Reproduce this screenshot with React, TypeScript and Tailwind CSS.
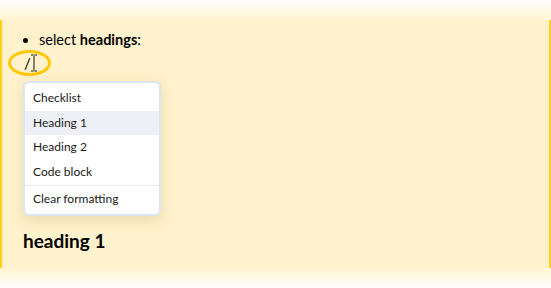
import React from "react";

const items = ["Checklist", "Heading 1", "Heading 2", "Code block"];

function TextCursor() {
  return (
    <svg width="8" height="18" viewBox="0 0 8 18" className="absolute left-[30px] top-[54px] z-10">
      <path d="M1 1h2.5M4.5 1H7M4 1.5v15M1 17h2.5M4.5 17H7" stroke="#111" strokeWidth="1" fill="none" />
    </svg>
  );
}

function SlashMenu() {
  return (
    <div className="absolute left-[23px] top-[81px] z-10 w-[138px] rounded-[6px] border-2 border-[#dde5f0] bg-white py-[3px] text-[12px] text-[#1a1a1a] shadow-[0_4px_14px_rgba(120,100,40,0.18)]">
      {items.map((label) => (
        <div
          key={label}
          className={`flex h-[24.5px] items-center px-[8px] ${label === "Heading 1" ? "bg-[#eff0f5]" : ""}`}
        >
          {label}
        </div>
      ))}
      <div className="my-[1px] h-px bg-[#eceef2]" />
      <div className="flex h-[24px] items-center px-[8px]">Clear formatting</div>
    </div>
  );
}

export default function App() {
  return (
    <div
      className="relative flex h-[288px] w-[551px] flex-col overflow-hidden bg-[#fff2cc] py-[20px] text-black"
      style={{ fontFamily: 'Lato, "Noto Sans", sans-serif' }}
    >
      <div className="pointer-events-none absolute inset-x-0 top-0 z-20 h-[22px] bg-gradient-to-b from-white to-[#fff2cc]/0" />
      <div className="pointer-events-none absolute inset-x-0 bottom-0 z-20 h-[22px] bg-gradient-to-t from-white to-[#fff2cc]/0" />

      <div className="flex flex-1 flex-col border-x-2 border-[#fcd116] pt-[10px] pl-[21px]">
        <ul className="list-disc pl-[16px] text-[14.5px] leading-5">
          <li>
            select <b>headings</b>:
          </li>
        </ul>

        <div className="pt-[3px] pl-[1px] text-[15px] leading-5">/</div>

        <div className="mt-[156px] text-[19px] font-bold leading-6">heading 1</div>
      </div>

      <div className="absolute left-[8px] top-[50px] h-[26px] w-[43px] rounded-[50%] border-[3px] border-[#ffc800]" />
      <TextCursor />
      <SlashMenu />
    </div>
  );
}
